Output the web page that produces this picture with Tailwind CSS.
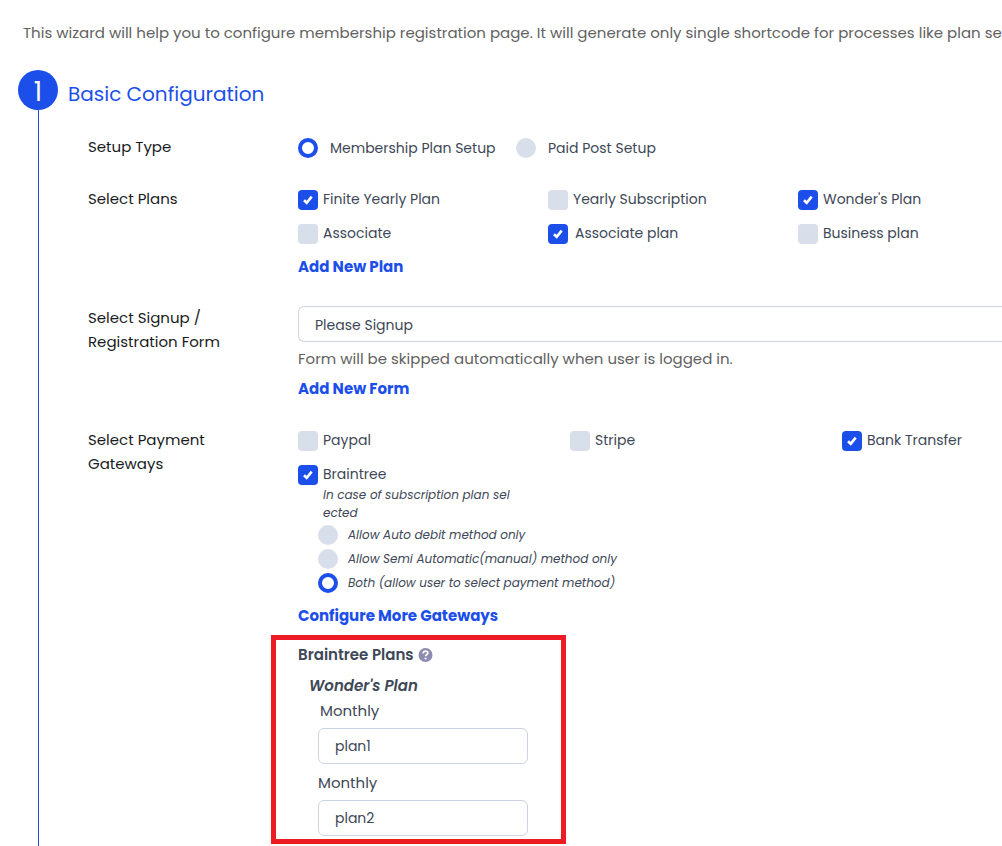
<!DOCTYPE html>
<html lang="en">
<head>
<meta charset="utf-8">
<meta name="viewport" content="width=device-width, initial-scale=1">
<title>Membership Setup Wizard</title>
<script src="https://cdn.jsdelivr.net/npm/@tailwindcss/browser@4"></script>
</head>
<body class="bg-white font-['Poppins','Inter','Liberation_Sans',sans-serif] text-sm text-[#3e4857]">
<main class="flex min-h-screen flex-col overflow-hidden pt-[21px]">
  <p class="whitespace-nowrap pl-[23px] text-[15px] leading-6 text-[#616161]">This wizard will help you to configure membership registration page. It will generate only single shortcode for processes like plan se</p>

  <section class="mt-[25px] flex flex-1 pl-[18px]">
    <div class="flex w-10 shrink-0 flex-col items-center">
      <span class="flex size-10 items-center justify-center rounded-full bg-[#1c4fea] pt-[5px] text-[26px] text-white">1</span>
      <span class="ml-px w-px flex-1 bg-[#1c4fea]"></span>
    </div>

    <div class="min-w-0 flex-1">
      <h2 class="flex h-12 items-center pl-[10px] text-xl text-[#1c4fea]">Basic Configuration</h2>

      <div class="mt-[13px] flex flex-col gap-[17px] pl-[30px]">
        <!-- Setup type -->
        <div class="flex h-[35px]" role="radiogroup" aria-labelledby="setup-label">
          <div id="setup-label" class="w-[210px] shrink-0 pt-1 text-[15px] leading-6 text-[#191b22]">Setup Type</div>
          <div class="flex h-[34px] items-center">
            <label class="flex items-center gap-3"><input type="radio" name="setup" checked class="size-5 appearance-none rounded-full bg-[#d8deea] checked:border-4 checked:border-[#1c4fea] checked:bg-white"><span class="w-[186px]">Membership Plan Setup</span></label>
            <label class="flex items-center gap-3"><input type="radio" name="setup" class="size-5 appearance-none rounded-full bg-[#d8deea] checked:border-4 checked:border-[#1c4fea] checked:bg-white">Paid Post Setup</label>
          </div>
        </div>

        <!-- Plans -->
        <div class="flex">
          <div class="w-[210px] shrink-0 pt-1 text-[15px] leading-6 text-[#191b22]">Select Plans</div>
          <div class="min-w-0 flex-1">
            <div class="grid grid-cols-[250px_250px_1fr]">
              <label class="relative flex h-[34px] items-center gap-[5px]"><input type="checkbox" checked class="peer size-5 appearance-none rounded bg-[#d8deea] checked:bg-[#1c4fea]"><svg class="pointer-events-none absolute left-0 hidden size-5 peer-checked:block" viewBox="0 0 20 20" fill="none" stroke="#fff" stroke-width="2.6"><path d="M6 10.2l2.7 2.6L13.7 6.6"/></svg><span class="pb-[2px]">Finite Yearly Plan</span></label>
              <label class="relative flex h-[34px] items-center gap-[5px]"><input type="checkbox" class="peer size-5 appearance-none rounded bg-[#d8deea] checked:bg-[#1c4fea]"><svg class="pointer-events-none absolute left-0 hidden size-5 peer-checked:block" viewBox="0 0 20 20" fill="none" stroke="#fff" stroke-width="2.6"><path d="M6 10.2l2.7 2.6L13.7 6.6"/></svg><span class="pb-[2px]">Yearly Subscription</span></label>
              <label class="relative flex h-[34px] items-center gap-[5px]"><input type="checkbox" checked class="peer size-5 appearance-none rounded bg-[#d8deea] checked:bg-[#1c4fea]"><svg class="pointer-events-none absolute left-0 hidden size-5 peer-checked:block" viewBox="0 0 20 20" fill="none" stroke="#fff" stroke-width="2.6"><path d="M6 10.2l2.7 2.6L13.7 6.6"/></svg><span class="pb-[2px]">Wonder's Plan</span></label>
              <label class="relative flex h-[34px] items-center gap-[5px]"><input type="checkbox" class="peer size-5 appearance-none rounded bg-[#d8deea] checked:bg-[#1c4fea]"><svg class="pointer-events-none absolute left-0 hidden size-5 peer-checked:block" viewBox="0 0 20 20" fill="none" stroke="#fff" stroke-width="2.6"><path d="M6 10.2l2.7 2.6L13.7 6.6"/></svg><span class="pb-[2px]">Associate</span></label>
              <label class="relative flex h-[34px] items-center gap-[7px]"><input type="checkbox" checked class="peer size-5 appearance-none rounded bg-[#d8deea] checked:bg-[#1c4fea]"><svg class="pointer-events-none absolute left-0 hidden size-5 peer-checked:block" viewBox="0 0 20 20" fill="none" stroke="#fff" stroke-width="2.6"><path d="M6 10.2l2.7 2.6L13.7 6.6"/></svg><span class="pb-[2px]">Associate plan</span></label>
              <label class="relative flex h-[34px] items-center gap-[5px]"><input type="checkbox" class="peer size-5 appearance-none rounded bg-[#d8deea] checked:bg-[#1c4fea]"><svg class="pointer-events-none absolute left-0 hidden size-5 peer-checked:block" viewBox="0 0 20 20" fill="none" stroke="#fff" stroke-width="2.6"><path d="M6 10.2l2.7 2.6L13.7 6.6"/></svg><span class="pb-[2px]">Business plan</span></label>
            </div>
            <a href="#" class="flex h-8 items-center text-[15px] font-bold text-[#1c4fea]">Add New Plan</a>
          </div>
        </div>

        <!-- Signup form -->
        <div class="flex">
          <label for="form" class="w-[210px] shrink-0 pt-[6px] text-[15px] leading-6 text-[#191b22]">Select Signup /<br>Registration Form</label>
          <div class="min-w-0 flex-1 pt-[6px]">
            <select id="form" class="block h-9 w-full appearance-none rounded-l-md border border-r-0 border-[#cdd3e2] bg-white pl-4 pt-[2px]"><option>Please Signup</option></select>
            <p class="mt-[5px] text-[15px] leading-6 text-[#616161]">Form will be skipped automatically when user is logged in.</p>
            <a href="#" class="flex h-9 items-center text-[15px] font-bold text-[#1c4fea]">Add New Form</a>
          </div>
        </div>

        <!-- Payment gateways -->
        <div class="flex">
          <div class="w-[210px] shrink-0 pt-1 text-[15px] leading-6 text-[#191b22]">Select Payment<br>Gateways</div>
          <div class="min-w-0 flex-1">
            <div class="grid grid-cols-[272px_272px_1fr]">
              <label class="relative flex h-[34px] items-center gap-[5px]"><input type="checkbox" class="peer size-5 appearance-none rounded bg-[#d8deea] checked:bg-[#1c4fea]"><svg class="pointer-events-none absolute left-0 hidden size-5 peer-checked:block" viewBox="0 0 20 20" fill="none" stroke="#fff" stroke-width="2.6"><path d="M6 10.2l2.7 2.6L13.7 6.6"/></svg><span class="pb-[2px]">Paypal</span></label>
              <label class="relative flex h-[34px] items-center gap-[5px]"><input type="checkbox" class="peer size-5 appearance-none rounded bg-[#d8deea] checked:bg-[#1c4fea]"><svg class="pointer-events-none absolute left-0 hidden size-5 peer-checked:block" viewBox="0 0 20 20" fill="none" stroke="#fff" stroke-width="2.6"><path d="M6 10.2l2.7 2.6L13.7 6.6"/></svg><span class="pb-[2px]">Stripe</span></label>
              <label class="relative flex h-[34px] items-center gap-[5px]"><input type="checkbox" checked class="peer size-5 appearance-none rounded bg-[#d8deea] checked:bg-[#1c4fea]"><svg class="pointer-events-none absolute left-0 hidden size-5 peer-checked:block" viewBox="0 0 20 20" fill="none" stroke="#fff" stroke-width="2.6"><path d="M6 10.2l2.7 2.6L13.7 6.6"/></svg><span class="pb-[2px]">Bank Transfer</span></label>
              <div class="col-span-3 pt-[7px]">
                <label class="relative flex h-5 items-center gap-[5px]"><input type="checkbox" checked class="peer size-5 appearance-none rounded bg-[#d8deea] checked:bg-[#1c4fea]"><svg class="pointer-events-none absolute left-0 hidden size-5 peer-checked:block" viewBox="0 0 20 20" fill="none" stroke="#fff" stroke-width="2.6"><path d="M6 10.2l2.7 2.6L13.7 6.6"/></svg><span class="pb-[2px]">Braintree</span></label>
                <p class="mt-px pl-[25px] text-xs italic leading-[18px]">In case of subscription plan sel<br>ected</p>
                <div class="mt-px flex flex-col pl-5 text-xs italic">
                  <label class="flex h-6 items-center gap-[10px]"><input type="radio" name="debit" class="size-5 appearance-none rounded-full bg-[#d8deea] checked:border-4 checked:border-[#1c4fea] checked:bg-white">Allow Auto debit method only</label>
                  <label class="flex h-6 items-center gap-[10px]"><input type="radio" name="debit" class="size-5 appearance-none rounded-full bg-[#d8deea] checked:border-4 checked:border-[#1c4fea] checked:bg-white">Allow Semi Automatic(manual) method only</label>
                  <label class="flex h-6 items-center gap-[10px]"><input type="radio" name="debit" checked class="size-5 appearance-none rounded-full bg-[#d8deea] checked:border-4 checked:border-[#1c4fea] checked:bg-white">Both (allow user to select payment method)</label>
                </div>
              </div>
            </div>
            <a href="#" class="mt-[5px] flex h-8 items-center text-[15px] font-bold text-[#1c4fea]">Configure More Gateways</a>

            <!-- Braintree plan IDs -->
            <div class="-ml-[27px] mb-[2px] mt-[3px] w-[295px] border-5 border-[#ed1c24] pb-[3px] pl-[22px] pt-[3px]">
              <h3 class="flex items-center gap-[5px] text-[15px] font-semibold leading-6">Braintree Plans
                <svg class="size-[15px]" viewBox="0 0 15 15" role="img" aria-label="Help"><circle cx="7.5" cy="7" r="7" fill="#8c8bb0"/><path d="M5.2 5.4C5.2 3.9 6.2 3.1 7.6 3.1S9.9 3.9 9.9 5.1C9.9 6.5 7.6 6.6 7.6 8.3" fill="none" stroke="#fff" stroke-width="1.7"/><circle cx="7.6" cy="10.5" r="1.1" fill="#fff"/></svg>
              </h3>
              <h4 class="mt-[7px] pl-[11px] text-[15px] font-semibold italic leading-6">Wonder's Plan</h4>
              <div class="flex flex-col pl-5">
                <label for="plan-a" class="mt-px pl-[2px] text-[15px] leading-6">Monthly</label>
                <input id="plan-a" type="text" value="plan1" class="mt-[5px] h-9 w-[210px] rounded-md border border-[#cdd3e2] px-4">
                <label for="plan-b" class="mt-[7px] text-[15px] leading-6">Monthly</label>
                <input id="plan-b" type="text" value="plan2" class="mt-[5px] h-9 w-[210px] rounded-md border border-[#cdd3e2] px-4">
              </div>
            </div>
          </div>
        </div>
      </div>
    </div>
  </section>
</main>
</body>
</html>
